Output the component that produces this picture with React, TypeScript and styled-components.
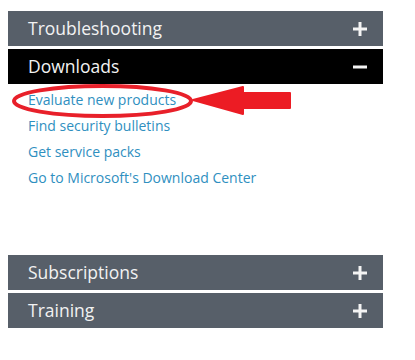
import React, { FC } from "react";
import styled, { createGlobalStyle } from "styled-components";

const GlobalStyle = createGlobalStyle`
  body {
    margin: 0;
    background: #fff;
    font-family: "Open Sans", "Noto Sans", sans-serif;
  }
`;

interface SectionProps {
  title: string;
  open?: boolean;
}

const Sign: FC<{ open?: boolean }> = ({ open }) => (
  <svg width="14" height="14" viewBox="0 0 14 14">
    <rect x="0" y="5.5" width="14" height="3" fill="#f4f4f4" />
    {!open && <rect x="5.5" y="0" width="3" height="14" fill="#f4f4f4" />}
  </svg>
);

const Section: FC<SectionProps> = ({ title, open }) => (
  <Header open={open}>
    <Title>{title}</Title>
    <Sign open={open} />
  </Header>
);

const links = [
  "Evaluate new products",
  "Find security bulletins",
  "Get service packs",
  "Go to Microsoft's Download Center",
];

export default function App() {
  return (
    <>
      <GlobalStyle />
      <Wrapper>
        <Section title="Troubleshooting" />
        <Section title="Downloads" open />
        <LinkList>
          {links.map(l => (
            <LinkItem key={l}>{l}</LinkItem>
          ))}
          {/* red circle + arrow drawn over the first link */}
          <Annotation width="300" height="40" viewBox="0 0 300 40">
            <ellipse cx="90.5" cy="18" rx="88.5" ry="15" fill="none" stroke="#e8202a" strokeWidth="4" />
            <polygon points="181,17 231,4 231,10 278,10 278,25 231,25 231,31" fill="#ec1c24" stroke="#ec1c24" strokeWidth="2" strokeLinejoin="round" />
          </Annotation>
        </LinkList>
        <Section title="Subscriptions" />
        <Section title="Training" />
      </Wrapper>
    </>
  );
}

const Wrapper = styled.div`
  width: 375px;
  padding: 11px 0 0 8px;
  display: flex;
  flex-direction: column;
  gap: 3px;
`;

const Header = styled.div<{ open?: boolean }>`
  height: 35px;
  background: ${p => (p.open ? "#000" : "#575f69")};
  display: flex;
  align-items: center;
  justify-content: space-between;
  padding: 0 16px 0 20px;
`;

const Title = styled.span`
  color: #f2f2f2;
  font-size: 17.5px;
  line-height: 1;
`;

const LinkList = styled.ul`
  position: relative;
  list-style: none;
  margin: 0;
  padding: 0 0 0 20px;
  height: 165px;
`;

const LinkItem = styled.li`
  color: #2f8fbf;
  font-size: 14px;
  line-height: 26px;
`;

const Annotation = styled.svg`
  position: absolute;
  left: 4px;
  top: -4px;
`;
